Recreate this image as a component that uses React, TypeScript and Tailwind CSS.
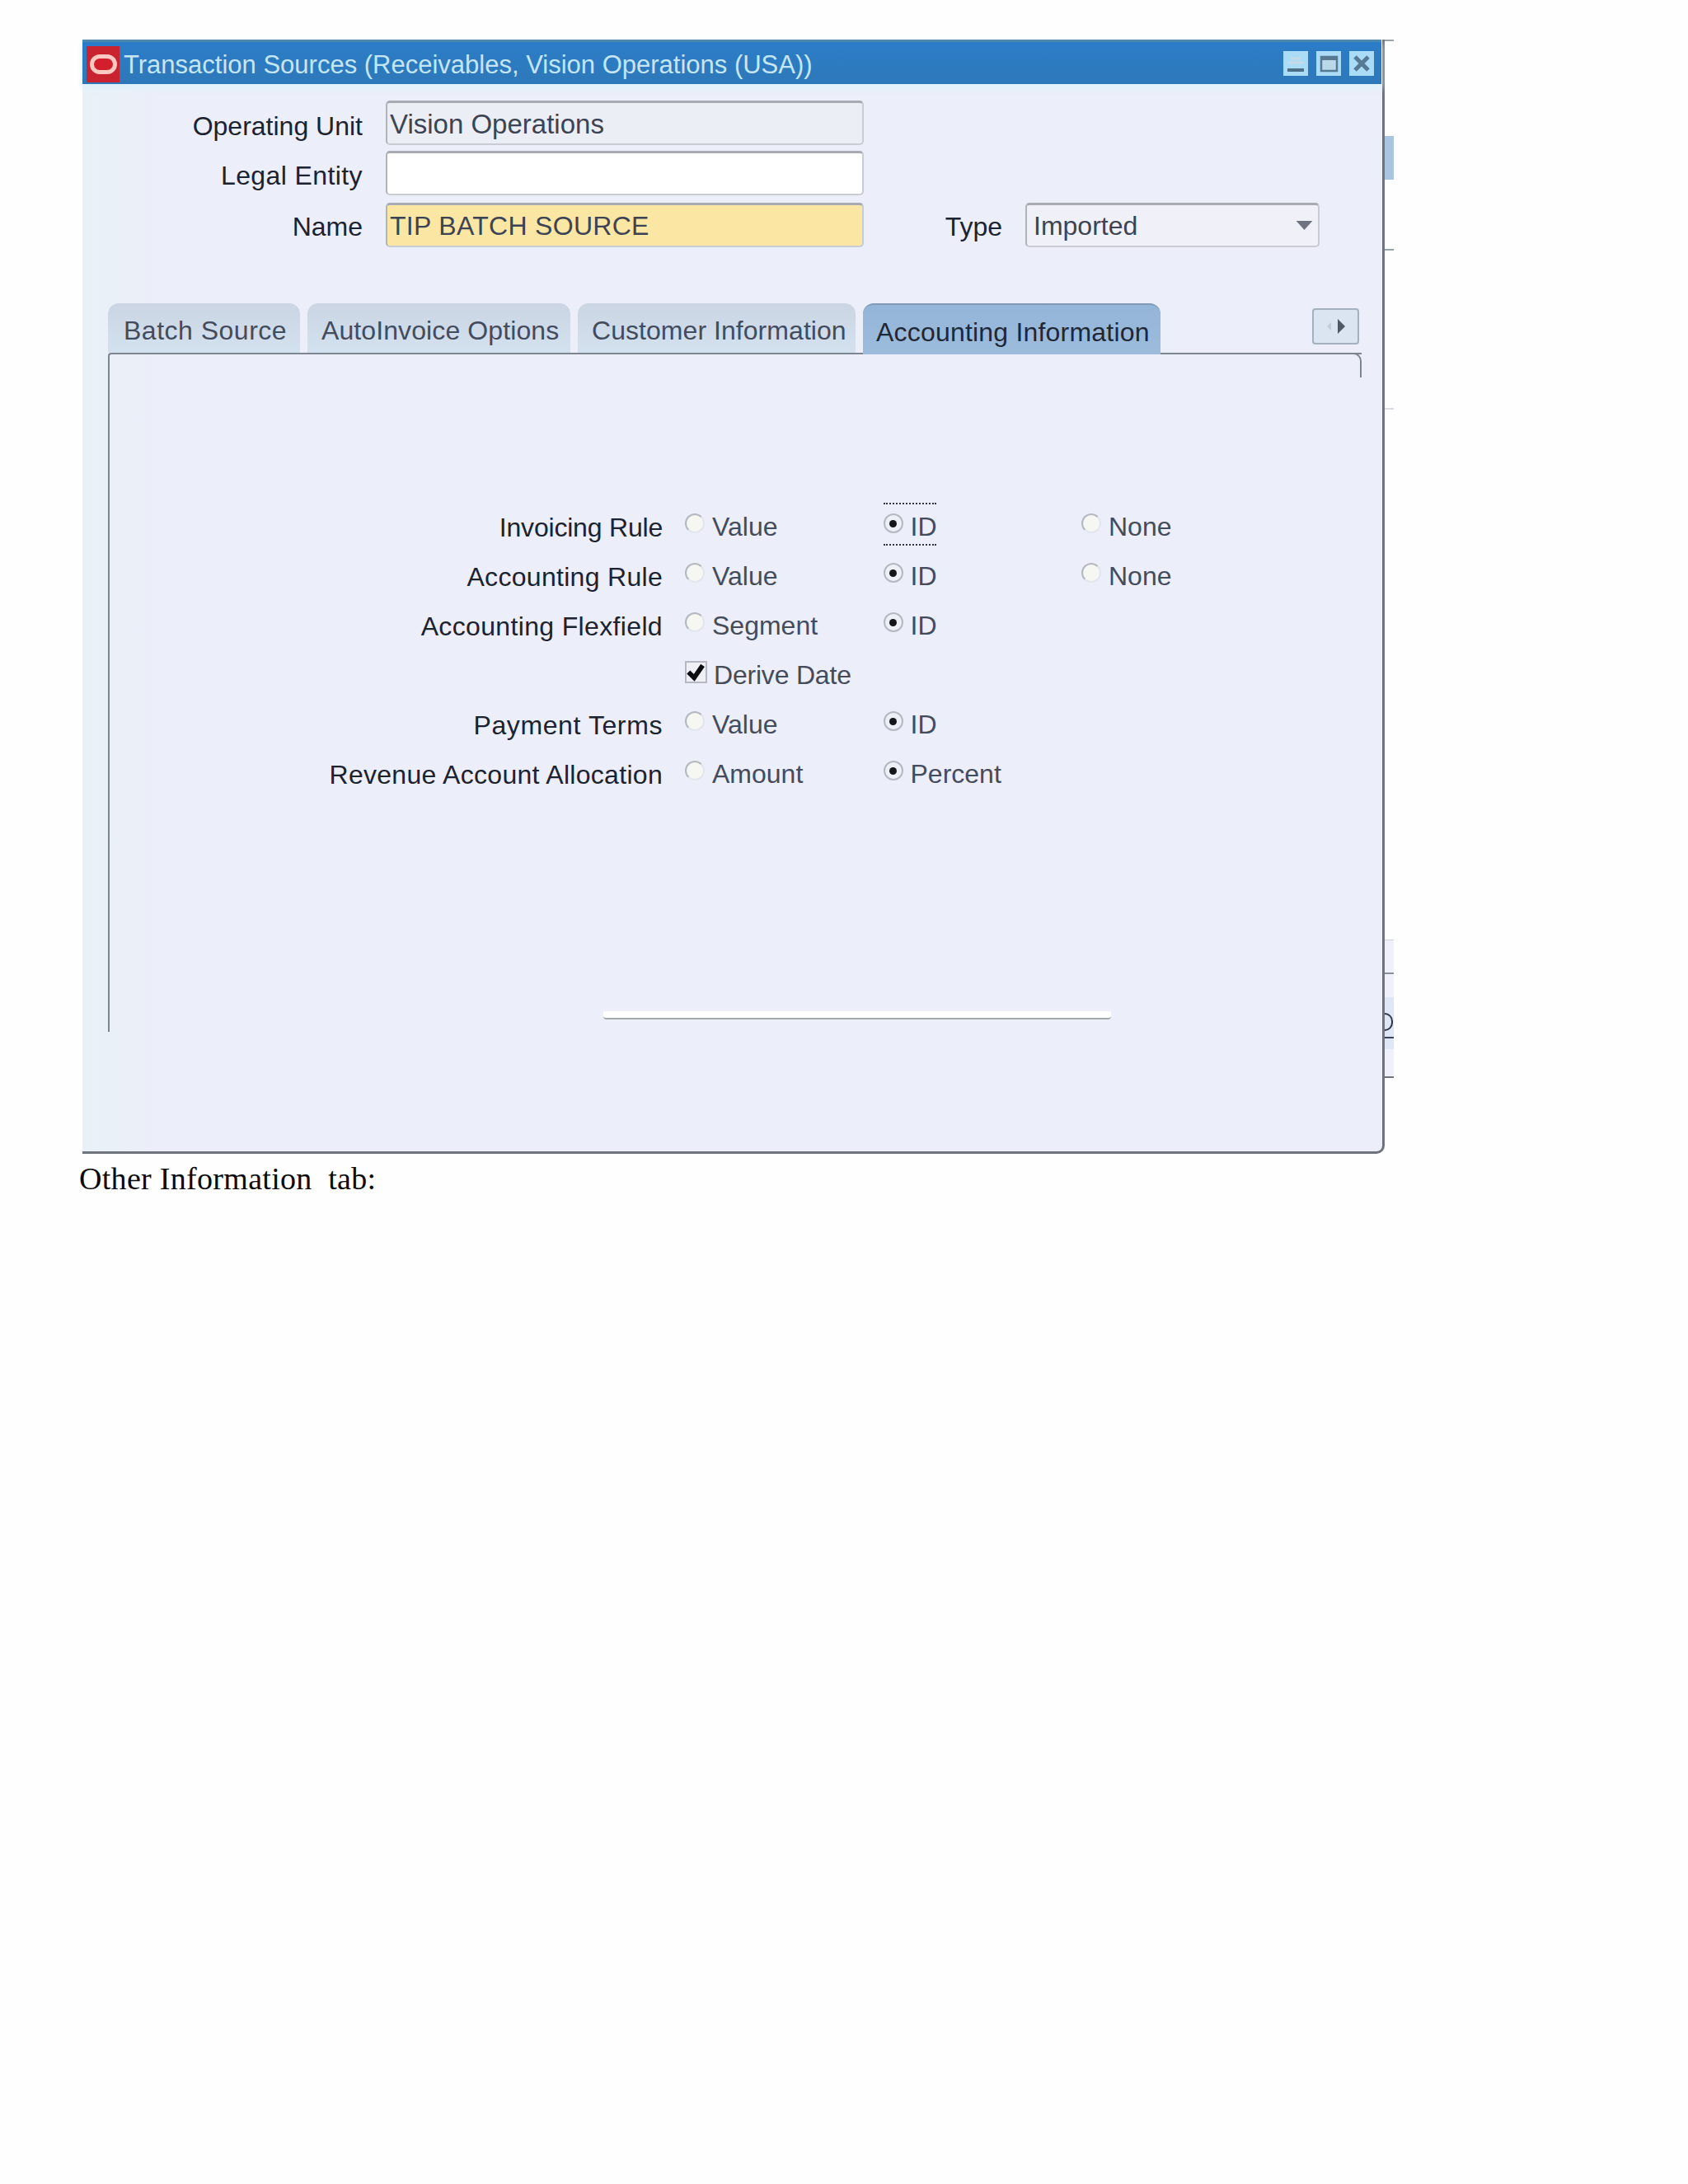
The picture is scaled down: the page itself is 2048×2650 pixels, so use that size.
const labelClass = "text-[32px] leading-none text-[#1c2330] text-right whitespace-nowrap";
const fieldClass = "flex items-center h-[54px] rounded-[5px] border-2 border-[#c9ccd2] border-t-[3px] border-t-[#a8acb2] border-l-[#b0b4ba] leading-none text-[#3c4454] whitespace-nowrap";

const tabs = [
  { title: "Batch Source", width: "w-[233px]", pad: "pl-[19px]", text: "tracking-[0.5px]", active: false },
  { title: "AutoInvoice Options", width: "w-[319px]", pad: "pl-[17px]", text: "tracking-[0.1px]", active: false },
  { title: "Customer Information", width: "w-[337px]", pad: "pl-[17px]", text: "tracking-[0.05px]", active: false },
  { title: "Accounting Information", width: "w-[361px]", pad: "pl-[16px]", text: "tracking-[0.2px]", active: true },
];

const rows = [
  { label: "Invoicing Rule", tracking: "tracking-[-0.2px]", options: ["Value", "ID", "None"], focus: true },
  { label: "Accounting Rule", tracking: "tracking-[0.3px]", options: ["Value", "ID", "None"] },
  { label: "Accounting Flexfield", tracking: "tracking-[0.35px]", options: ["Segment", "ID"] },
  { label: "", tracking: "", check: "Derive Date", options: [] },
  { label: "Payment Terms", tracking: "tracking-[0.6px]", options: ["Value", "ID"] },
  { label: "Revenue Account Allocation", tracking: "tracking-[0.3px]", options: ["Amount", "Percent"] },
];

function Radio({ on }: { on: boolean }) {
  if (on) {
    return (
      <span className="flex items-center justify-center w-[24px] h-[24px] mb-[10px] shrink-0 rounded-full border-2 border-[#b4b8c2] bg-[#eef0f7]">
        <span className="w-[9px] h-[9px] rounded-full bg-[#14161c]" />
      </span>
    );
  }
  return (
    <span className="w-[24px] h-[24px] mb-[10px] shrink-0 rounded-full border-2 border-[#e4e6ee] border-t-[#b4b8bf] border-l-[#b4b8bf] bg-[#f6f6f3]" />
  );
}

function Option({ text, on, focus }: { text: string; on: boolean; focus?: boolean }) {
  return (
    <div className="relative flex items-center gap-[9px] w-[240.5px] h-full text-[32px] leading-none text-[#444c5c] whitespace-nowrap">
      <Radio on={on} />
      <span className="-mt-[2px]">{text}</span>
      {focus && (
        <span className="absolute left-0 top-[0px] w-[64px] h-[52px] border-y-2 border-dotted border-[#30343c]" />
      )}
    </div>
  );
}

function Logo() {
  return (
    <div className="flex items-center justify-center w-[40px] h-[44px] ml-[5px] mt-[2px] bg-[#c8232e]">
      <div className="w-[33px] h-[24px] rounded-full border-[5px] border-[#ffc9c2] bg-[#d21f2b]" />
    </div>
  );
}

function WinButton({ kind }: { kind: "min" | "max" | "close" }) {
  return (
    <div className="w-[30px] h-[30px] bg-[#aadcf8]">
      <svg viewBox="0 0 30 30" className="w-full h-full">
        {kind === "min" && (
          <>
            <path d="M9 9h12M6 14h18" stroke="#c5d9e8" strokeWidth="3" />
            <rect x="5" y="21" width="20" height="4" fill="#4d7087" />
          </>
        )}
        {kind === "max" && (
          <>
            <rect x="6" y="7" width="19" height="17" fill="#b9d8ea" stroke="#577a92" strokeWidth="2.5" />
            <rect x="6" y="7" width="19" height="4" fill="#577a92" />
          </>
        )}
        {kind === "close" && <path d="M7 7l16 16M23 7L7 23" stroke="#567a94" strokeWidth="5" />}
      </svg>
    </div>
  );
}

function SideStrip() {
  return (
    <div className="flex flex-col w-[11px] shrink-0">
      <div className="h-[2px] bg-[#9aa3aa]" />
      <div className="h-[115px]" />
      <div className="h-[53px] bg-[#a9c5e2]" />
      <div className="h-[84px]" />
      <div className="h-[2px] bg-[#98a2ad]" />
      <div className="h-[191px]" />
      <div className="h-[2px] bg-[#d8dbe2]" />
      <div className="h-[643px]" />
      <div className="h-[168px] flex flex-col bg-[#f0f0fa]">
        <div className="h-[1px] bg-[#cfd2da]" />
        <div className="h-[39px]" />
        <div className="h-[2px] bg-[#8b8f99]" />
        <div className="h-[28px]" />
        <div className="relative h-[63px] bg-[#dfe7f6]">
          <div className="absolute left-0 top-[19px] w-[10px] h-[22px] rounded-r-full border-2 border-l-0 border-[#2d3646]" />
          <div className="absolute left-0 top-[48px] w-full h-[2px] bg-[#39465c]" />
        </div>
        <div className="flex-1" />
        <div className="h-[2px] bg-[#6f737c]" />
      </div>
    </div>
  );
}

export default function App() {
  return (
    <div className="w-[2048px] h-[2650px] bg-[#fefefe] pt-[48px] pl-[100px] font-['Liberation_Sans',Arial,sans-serif]">
      <div className="flex items-start">
        {/* form window */}
        <div className="flex flex-col w-[1580px] h-[1352px] bg-linear-to-r from-[#e9f1f7] from-0% to-[#eceef9] to-[6%] border-r-[3px] border-b-[3px] border-[#6f747c] rounded-br-[10px]">
          <div className="flex items-center h-[54px] mr-[1px] bg-linear-to-b from-[#2b7dc8] to-[#2e78b9] border-t-[3px] border-[#4f88ad] shadow-[0_5px_8px_#def2fb]">
            <Logo />
            <span className="ml-[5px] pt-[3px] text-[31px] leading-none text-[#c4e6f4] whitespace-nowrap">
              Transaction Sources (Receivables, Vision Operations (USA))
            </span>
            <div className="flex gap-[10px] ml-auto mr-[9px]">
              <WinButton kind="min" />
              <WinButton kind="max" />
              <WinButton kind="close" />
            </div>
          </div>

          {/* header fields */}
          <div className="flex flex-col mt-[20px]">
            <div className="flex items-center">
              <div className={`w-[340px] pt-[8px] ${labelClass}`}>Operating Unit</div>
              <div className={`ml-[28px] w-[580px] pl-[3px] pt-[2px] bg-[#eceef6] text-[33px] ${fieldClass}`}>Vision Operations</div>
            </div>
            <div className="flex items-center mt-[7px]">
              <div className={`w-[340px] pt-[5px] tracking-[0.4px] ${labelClass}`}>Legal Entity</div>
              <div className={`ml-[28px] w-[580px] bg-white ${fieldClass}`} />
            </div>
            <div className="flex items-center mt-[9px]">
              <div className={`w-[340px] pt-[4px] ${labelClass}`}>Name</div>
              <div className={`ml-[28px] w-[580px] pl-[3px] bg-[#fbe6a4] text-[32px] tracking-[0.3px] ${fieldClass}`}>TIP BATCH SOURCE</div>
              <div className={`ml-[98px] w-[70px] pt-[4px] ${labelClass}`}>Type</div>
              <div className={`relative ml-[28px] w-[357px] pl-[8px] bg-[#f0f1f8] text-[32px] ${fieldClass}`}>
                Imported
                <svg viewBox="0 0 18 10" className="absolute right-[6px] top-[19px] w-[21px] h-[11px]">
                  <path d="M0 0h18L9 10z" fill="#6f7480" />
                </svg>
              </div>
            </div>
          </div>

          {/* tabs */}
          <div className="flex items-start w-[1521px] h-[60px] ml-[31px] mt-[68px]">
            {tabs.map((tab) => (
              <div
                key={tab.title}
                className={`flex items-center pt-[5px] mr-[9px] rounded-t-[13px] text-[32px] leading-none whitespace-nowrap ${tab.width} ${tab.pad} ${tab.text} ${
                  tab.active
                    ? "relative z-10 h-[62px] bg-linear-to-b from-[#93b5d8] to-[#9dbcdc] border-t-2 border-[#7f9bb8] text-[#1f2836]"
                    : "h-[60px] bg-linear-to-b from-[#cbd5e3] to-[#d3e1ee] text-[#434c5e]"
                }`}
              >
                {tab.title}
              </div>
            ))}
            <div className="flex items-center justify-center w-[57px] h-[44px] ml-auto mr-[3px] mt-[6px] rounded-[4px] border-2 border-[#a4b0be] bg-[#dbe5f1]">
              <svg viewBox="0 0 24 20" className="w-[24px] h-[20px]">
                <path d="M6 5L1 10l5 5z" fill="#c4cedb" />
                <path d="M14 1l9 9-9 9z" fill="#4f5966" />
              </svg>
            </div>
          </div>

          {/* tab panel */}
          <div className="relative flex flex-col w-[1521px] h-[824px] ml-[31px] pt-[180px] border-t-2 border-l-2 border-[#7d8590] rounded-tl-[4px]">
            <div className="absolute right-0 -top-[2px] w-[14px] h-[30px] border-t-2 border-r-2 border-[#7d8590] rounded-tr-[10px]" />
            {rows.map((row) => (
              <div key={row.label || row.check} className="flex items-center h-[60px]">
                <div className={`w-[671px] ${labelClass} ${row.tracking}`}>{row.label}</div>
                <div className="flex h-full ml-[27px]">
                  {row.check && (
                    <div className="flex items-center gap-[8px] text-[32px] tracking-[-0.2px] leading-none text-[#444c5c] whitespace-nowrap">
                      <span className="flex items-center justify-center w-[27px] h-[27px] mb-[10px] border-2 border-[#b6b9c4] bg-[#eff0f5]">
                        <svg viewBox="0 0 20 20" className="w-[23px] h-[23px]">
                          <path d="M2 10l6 6 9-13" fill="none" stroke="#0c0d12" strokeWidth="5" />
                        </svg>
                      </span>
                      <span className="-mt-[2px]">{row.check}</span>
                    </div>
                  )}
                  {row.options.map((opt, i) => (
                    <Option key={opt} text={opt} on={i === 1} focus={row.focus && i === 1} />
                  ))}
                </div>
              </div>
            ))}
            <div className="w-[616px] h-[10px] ml-[599px] mt-[257px] bg-white border-b-2 border-[#a2a7ae] rounded-b-[4px]" />
          </div>
        </div>
        <SideStrip />
      </div>

      <div className="-ml-[4px] mt-[11px] text-[38px] leading-none tracking-[0.3px] text-[#0a0a0a] whitespace-pre font-['Liberation_Serif','Times_New_Roman',serif]">
        Other Information  tab:
      </div>
    </div>
  );
}
